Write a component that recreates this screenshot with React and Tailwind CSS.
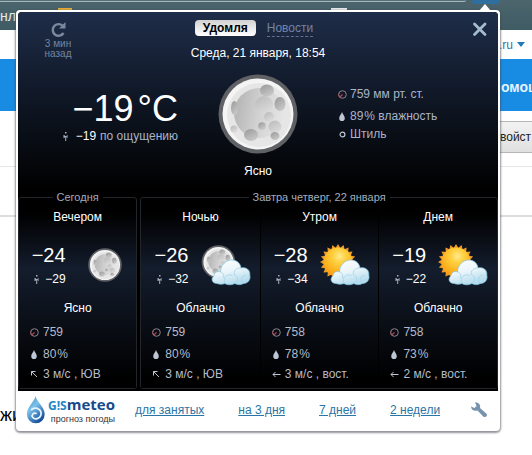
import clsx from "clsx";

const forecast = [
  { part: "Ночью", temp: "−26", feels: "−32", sky: "moonCloud", text: "Облачно", pressure: "759", humidity: "80", wind: "3 м/с , ЮВ", dir: "nw" },
  { part: "Утром", temp: "−28", feels: "−34", sky: "sunCloud", text: "Облачно", pressure: "758", humidity: "78", wind: "3 м/с , вост.", dir: "w" },
  { part: "Днем", temp: "−19", feels: "−22", sky: "sunCloud", text: "Облачно", pressure: "758", humidity: "73", wind: "2 м/с , вост.", dir: "w" },
];

const evening = { part: "Вечером", temp: "−24", feels: "−29", sky: "moon", text: "Ясно", pressure: "759", humidity: "80", wind: "3 м/с , ЮВ", dir: "nw" };

const links = ["для занятых", "на 3 дня", "7 дней", "2 недели"];

/* ---------- icons ---------- */

const Person = () => (
  <svg width="5" height="9" viewBox="0 0 5 9" className="shrink-0" fill="#a4afc0" aria-hidden="true">
    <rect x="2" y="0" width="1.5" height="1.5" />
    <path d="M0.5 3H1.500L2 4H3.500L4 3H4.500V6H3.700V4.800H3.200V9H2.200V5L1.200 6H0.500Z" />
  </svg>
);

const Gauge = () => (
  <svg width="9" height="9" viewBox="0 0 9 9" className="shrink-0" fill="none" aria-hidden="true">
    <circle cx="4.5" cy="4.5" r="3.8" stroke="#8d8390" strokeWidth="1" />
    <path d="M1.8 7.2L4.5 4.5" stroke="#b8474f" strokeWidth="1.1" />
    <path d="M1 6.6A3.8 3.8 0 0 1 1.6 2" stroke="#935a64" strokeWidth="1" />
  </svg>
);

const Drop = () => (
  <svg width="9" height="9" viewBox="0 0 9 9" className="shrink-0" fill="#bcc6d4" aria-hidden="true">
    <path d="M4 0C4.5 2.2 6.8 4 6.8 6.2A2.8 2.8 0 0 1 1.2 6.2C1.2 4 3.5 2.2 4 0Z" />
  </svg>
);

const Wind = ({ dir }) => (
  <svg width="9" height="9" viewBox="0 0 9 9" className="shrink-0" fill="none" stroke="#bcc6d4" aria-hidden="true">
    {dir === "calm" && <circle cx="4.5" cy="4.5" r="2.4" strokeWidth="1.2" />}
    {dir === "nw" && <path d="M1.5 5.5V1.5H5.5M1.5 1.5L7 7" />}
    {dir === "w" && <path d="M8.500 4.500H1M3.500 2L1 4.500L3.500 7" />}
  </svg>
);

const MoonShape = ({ id }) => (
  <>
    <defs>
      <linearGradient id={id} x1="0" y1="0.4" x2="1" y2="0.6">
        <stop offset="0" stopColor="#b4b4b4" />
        <stop offset="0.5" stopColor="#d2d2d2" />
        <stop offset="1" stopColor="#e6e6e6" />
      </linearGradient>
      <linearGradient id={id + "c"} x1="0.2" y1="0" x2="0.8" y2="1">
        <stop offset="0" stopColor="#9c9c9c" />
        <stop offset="1" stopColor="#cccccc" />
      </linearGradient>
      <linearGradient id={id + "s"} x1="0.2" y1="0" x2="0.8" y2="1">
        <stop offset="0" stopColor="#bcbcbc" />
        <stop offset="1" stopColor="#dedede" />
      </linearGradient>
    </defs>
    <circle cx="40" cy="40" r="39.5" fill="#5f6165" />
    <circle cx="40" cy="40" r="35.5" fill="#f4f4f4" />
    <circle cx="41" cy="41" r="32" fill="#e6e6e6" />
    <circle cx="41" cy="39" r="25" fill={`url(#${id})`} />
    <g fill={`url(#${id}s)`}>
      <circle cx="46" cy="31" r="9" />
      <circle cx="51" cy="43" r="5" />
      <circle cx="57" cy="53" r="6.5" />
      <circle cx="16" cy="55" r="3.5" />
    </g>
    <g fill={`url(#${id}c)`}>
      <ellipse cx="49" cy="16.5" rx="7" ry="6" />
      <ellipse cx="62" cy="30" rx="5.5" ry="7" />
      <ellipse cx="16.5" cy="34" rx="3.5" ry="7" />
      <circle cx="44" cy="52" r="3.8" />
      <ellipse cx="33" cy="61" rx="7" ry="6" />
      <ellipse cx="57" cy="62" rx="4.5" ry="4" />
    </g>
  </>
);

const CloudShape = ({ id }) => (
  <>
    <defs>
      <linearGradient id={id} x1="0" y1="0" x2="0.4" y2="1">
        <stop offset="0" stopColor="#ffffff" />
        <stop offset="0.55" stopColor="#eaf5fa" />
        <stop offset="1" stopColor="#b5dcee" />
      </linearGradient>
    </defs>
    <path
      d="M16 39.500C11 39.500 9.500 34.500 13 32C13 28.500 16.500 26.500 19.500 28C19.500 21 25 16 30.500 16C36 16 39.500 19.500 40 24C45 22.500 49.500 26 48.800 31C50 35.500 47 39.500 42.500 39.500C39 41.500 35.500 40.500 34 39.500C30 41.500 26 41 24 39.500C21.500 40.500 18.500 40.500 16 39.500Z"
      fill={`url(#${id})`}
      stroke="#7fc3df"
      strokeWidth="0.7"
    />
    <path
      d="M19.500 28C22.500 28.500 23.500 31.500 22 34M24 39.500C21.500 34 26 29 31.500 31.500M40 24C35.500 24 32 27 33.500 31C37 32 38 36.500 34 39.500M42.500 39.500C39 36 40 31.500 44.500 31.500"
      fill="none"
      stroke="#a3d2e6"
      strokeWidth="0.8"
    />
  </>
);

const SunShape = ({ id }) => (
  <>
    <defs>
      <radialGradient id={id} cx="0.55" cy="0.3" r="0.7">
        <stop offset="0" stopColor="#ffe98e" />
        <stop offset="0.35" stopColor="#ffcf3c" />
        <stop offset="1" stopColor="#fb9f10" />
      </radialGradient>
    </defs>
    <g fill="#ee9a2a">
      {[0, 18, 36, 54, 72].map((a) => (
        <path key={a} d="M18 0L21 5H15ZM36 18L31 21V15ZM18 36L15 31H21ZM0 18L5 15V21Z" transform={`rotate(${a} 18 18)`} />
      ))}
    </g>
    <circle cx="18" cy="18" r="14.5" fill={`url(#${id})`} />
  </>
);

const Sky = ({ kind, id }) => {
  if (kind === "moon") {
    return (
      <svg width="34" height="34" viewBox="0 0 80 80" className="ml-2.5 mr-1.5" aria-hidden="true">
        <MoonShape id={id} />
      </svg>
    );
  }
  return (
    <svg width="50" height="42" viewBox="0 0 50 42" aria-hidden="true">
      {kind === "sunCloud" ? (
        <SunShape id={id} />
      ) : (
        <g transform="translate(0.5 1) scale(0.425)">
          <MoonShape id={id} />
        </g>
      )}
      <CloudShape id={id + "cloud"} />
    </svg>
  );
};

/* ---------- forecast ---------- */

const DayPart = ({ item, divider }) => (
  <article
    className={clsx(
      "bg-linear-to-b/srgb from-black from-5% via-[#141d2d] via-35% to-black to-95% pt-[5px] pb-1.5 text-center text-white",
      divider && "border-l border-black"
    )}
  >
    <h3>{item.part}</h3>
    <div className="mt-4 flex h-12 items-center justify-center gap-3 pl-1">
      <div className="flex flex-col items-end gap-1">
        <p className="text-xl leading-6">{item.temp}</p>
        <p className="flex items-center gap-1.5">
          <Person />
          {item.feels}
        </p>
      </div>
      <Sky kind={item.sky} id={"sky" + item.part} />
    </div>
    <p className="mt-[11px]">{item.text}</p>
    <ul className="mt-2 pl-[11px] text-left text-[#b4bccb]">
      <li className="flex items-center gap-1">
        <Gauge />
        {item.pressure}
      </li>
      <li className="mt-1.5 flex items-center gap-1">
        <Drop />
        <span>
          {item.humidity}
          <span className="ml-px">%</span>
        </span>
      </li>
      <li className="mt-1 flex items-center gap-1">
        <Wind dir={item.dir} />
        {item.wind}
      </li>
    </ul>
  </article>
);

const Day = ({ title, children }) => (
  <fieldset className="min-w-0 rounded-[3px] border border-[#222529]">
    <legend className="mx-auto px-1 text-[11px] leading-[14px] text-[#a5adbd]">{title}</legend>
    {children}
  </fieldset>
);

/* ---------- popup ---------- */

const Header = () => (
  <header className="grid grid-cols-3 items-start pt-2">
    <button className="ml-5 mt-0.5 flex w-10 flex-col items-center text-[10px] leading-[10px] text-[#76839d]">
      <svg width="17" height="17" viewBox="0 0 17 17" fill="none" aria-hidden="true">
        <path d="M13.500 11A5.800 5.800 0 1 1 12.500 3.700" stroke="#7c899d" strokeWidth="2.400" />
        <path d="M15.500 0V6.500H9Z" fill="#7c899d" />
      </svg>
      3 мин назад
    </button>
    <div className="flex flex-col items-center whitespace-nowrap">
      <nav className="flex gap-[11px] pr-2">
        <button className="h-4 rounded bg-linear-to-b from-[#d2d2d2] to-white px-2 font-bold text-black">Удомля</button>
        <button className="border-b border-dashed border-[#5f7090] text-[#7385a8]">Новости</button>
      </nav>
      <p className="mt-2 text-white">Среда, 21 января, 18:54</p>
    </div>
    <button className="mr-2.5 mt-0.5 h-4 w-4 justify-self-end" aria-label="Закрыть">
      <svg width="16" height="16" viewBox="0 0 16 16" fill="none" stroke="#a5bccf" strokeWidth="2.800" strokeLinecap="round" aria-hidden="true">
        <path d="M2.500 2L13 12.500M13 2L2.500 12.500" />
      </svg>
    </button>
  </header>
);

const Now = () => (
  <section className="grid grid-cols-3 pb-[11px] pt-[13px] text-[#a9b4c8]">
    <div className="flex flex-col items-end pt-4">
      <p className="text-4xl leading-[38px] text-white">
        −19<span className="ml-1">°C</span>
      </p>
      <p className="flex items-center">
        <Person />
        <span className="ml-2 mr-1 text-white">−19</span>по ощущению
      </p>
    </div>
    <div className="flex flex-col items-center">
      <svg width="80" height="80" viewBox="0 0 80 80" aria-hidden="true">
        <MoonShape id="now" />
      </svg>
      <p className="mt-[9px] text-white">Ясно</p>
    </div>
    <ul className="pt-3">
      <li className="flex items-center gap-[3px]">
        <Gauge />
        759 мм рт. ст.
      </li>
      <li className="mt-1.5 flex items-center gap-[3px]">
        <Drop />
        <span>
          89<span className="ml-px">%</span> влажность
        </span>
      </li>
      <li className="mt-0.5 flex items-center gap-[3px]">
        <Wind dir="calm" />
        Штиль
      </li>
    </ul>
  </section>
);

const Footer = () => (
  <footer className="flex h-[38px] items-center pl-2 pr-2.5">
    <a href="#" className="flex items-center gap-0.5">
      <svg width="20" height="28" viewBox="0 0 20 29" aria-hidden="true">
        <defs>
          <linearGradient id="logo" x1="0" y1="0" x2="0.6" y2="1">
            <stop offset="0" stopColor="#2f86bf" />
            <stop offset="0.45" stopColor="#7cc2ea" />
            <stop offset="1" stopColor="#164f9c" />
          </linearGradient>
        </defs>
        <path d="M9.500 0C10.500 6 19 11 19 19A9.200 9.200 0 0 1 0.600 19C0.600 11 8.500 6 9.500 0Z" fill="url(#logo)" />
        <path d="M5.500 14C11 10.500 16.500 14.500 15 20C14 23.500 9 25 6.500 22C5 19.500 7.500 17 10 18" fill="none" stroke="#e6f5fd" strokeWidth="1.800" strokeLinecap="round" />
      </svg>
      <span className="flex flex-col items-end">
        <span className="font-['Open_Sans'] text-[15px] font-bold leading-[18px] text-[#174a8b]">
          <span className="text-xs text-[#2287c5]">G!S</span>meteo
        </span>
        <span className="text-[9px] leading-[11px] text-[#333]">прогноз погоды</span>
      </span>
    </a>
    <nav className="ml-5 mr-auto flex gap-[34px] text-[#2a75a5]">
      {links.map((l) => (
        <a key={l} href="#" className="underline">
          {l}
        </a>
      ))}
    </nav>
    <button className="h-[18px] w-[18px]" aria-label="Настройки">
      <svg width="18" height="18" viewBox="0 0 18 18" fill="#7893ad" aria-hidden="true">
        <path d="M5 1.500C8.500 1 11 4 10 7L16.500 12.800C18 14.500 15.500 17 13.500 15.800L7.500 9.500C4.500 10.600 1 9 1 5.500L4.500 7L6.500 5L5 1.500Z" />
      </svg>
    </button>
  </footer>
);

const Popup = () => (
  <div className="absolute left-4 right-8 top-[10px] rounded border-2 border-white bg-white text-xs leading-4 shadow-[0_1px_2px_1px_rgba(70,75,85,0.6)]">
    <svg width="12" height="8" viewBox="0 0 12 8" className="absolute -top-2 right-[7px]" fill="#fff" aria-hidden="true">
      <path d="M6 0L12 7V8H0V7Z" />
    </svg>
    <main className="rounded-t-sm bg-black pb-0.5">
      <div className="rounded-t-sm bg-linear-to-b/srgb from-[#1e2d49] to-black">
        <Header />
        <Now />
      </div>
      <div className="grid grid-cols-[1fr_3fr] gap-[3px]">
        <Day title="Сегодня">
          <DayPart item={evening} />
        </Day>
        <Day title="Завтра четверг, 22 января">
          <div className="grid grid-cols-3">
            {forecast.map((item, i) => (
              <DayPart key={item.part} item={item} divider={i > 0} />
            ))}
          </div>
        </Day>
      </div>
    </main>
    <Footer />
  </div>
);

/* page underneath the popup */
const Page = () => (
  <div aria-hidden="true">
    <div className="h-[30px] bg-linear-to-b from-[#4c656d] to-[#3f5b64] text-sm leading-4 text-[#e4eaec]">
      <div className="flex h-2">
        <div className="h-0.5 w-[466px] rounded-br border-b border-[#a9b7bb] bg-[#55707a]" />
        <div className="ml-1.5 h-1 w-7 rounded-b bg-[#2e6f9f]" />
      </div>
      <div className="flex">
        <span className="w-[58px]">нл</span>
        <span className="h-1 w-[14px] bg-[#e8ab35]" />
        <span className="ml-[259px] h-1 w-4 bg-[#e6ecee]" />
      </div>
    </div>
    <div className="flex h-[29px] items-center justify-end gap-1 pr-[7px] text-xs text-[#2a78b0]">
      .ru
      <svg width="8" height="5" viewBox="0 0 8 5" fill="#1f7ab8">
        <path d="M0 0H8L4 5Z" />
      </svg>
    </div>
    <div className="flex h-[52px] items-center justify-end bg-[#188be2] pt-1 text-sm font-bold text-[#e4f3ff]">
      <span className="w-[31px]">омощ</span>
    </div>
    <div className="flex h-14 justify-end border-b border-[#e6e6e6] pt-2.5">
      <span className="h-8 w-10 border-y border-[#b5b5b5] bg-linear-to-b from-[#f2f2f2] to-[#e0e0e0] pl-2 text-xs leading-[30px] text-[#222]">
        войст
      </span>
    </div>
    <div className="h-[50px] border-b-2 border-[#dcdcdc]" />
    <p className="mt-[186px] text-lg leading-6 text-black">жи</p>
  </div>
);

export default function App() {
  return (
    <div className="relative min-h-screen overflow-hidden bg-white font-['Liberation_Sans',Arial,sans-serif]">
      <Page />
      <Popup />
    </div>
  );
}
